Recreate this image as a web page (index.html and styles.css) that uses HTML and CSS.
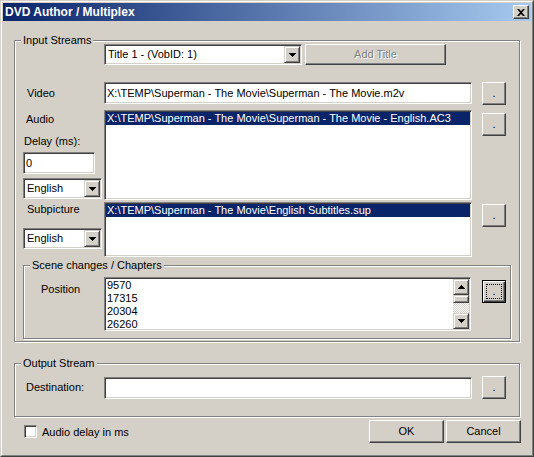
FILE: index.html
```html
<!DOCTYPE html>
<html>
<head>
<meta charset="utf-8">
<title>DVD Author / Multiplex</title>
<link rel="stylesheet" href="styles.css">
</head>
<body>
<div class="window">
  <div class="frame">
    <div class="titlebar">
      <span class="title">DVD Author / Multiplex</span>
      <span class="close"><svg width="8" height="7" viewBox="0 0 8 7"><path d="M0 0h2l2 2l2-2h2l-3 3.5l3 3.5h-2l-2-2l-2 2h-2l3-3.5z" fill="#000"/></svg></span>
    </div>
    <div class="client">
      <div class="group group-input">
        <span class="legend">Input Streams</span>
        <div class="row row-title">
          <div class="combo combo-title">
            <span class="combo-text">Title 1 - (VobID: 1)</span>
            <span class="drop"><svg width="7" height="4" viewBox="0 0 7 4"><path d="M0 0h7v1H0zM1 1h5v1H1zM2 2h3v1H2zM3 3h1v1H3z" fill="#000"/></svg></span>
          </div>
          <div class="btn btn-add disabled">Add Title</div>
        </div>
        <div class="row row-video">
          <div class="lbl lbl-video">Video</div>
          <div class="edit edit-wide">X:\TEMP\Superman - The Movie\Superman - The Movie.m2v</div>
          <div class="btn browse">.</div>
        </div>
        <div class="row row-audio">
          <div class="side">
            <div class="lbl lbl-audio">Audio</div>
            <div class="lbl lbl-delay">Delay (ms):</div>
            <div class="edit edit-delay">0</div>
            <div class="combo combo-lang">
              <span class="combo-text">English</span>
              <span class="drop"><svg width="7" height="4" viewBox="0 0 7 4"><path d="M0 0h7v1H0zM1 1h5v1H1zM2 2h3v1H2zM3 3h1v1H3z" fill="#000"/></svg></span>
            </div>
          </div>
          <div class="listbox list-audio">
            <div class="items">
              <div class="item selected">X:\TEMP\Superman - The Movie\Superman - The Movie - English.AC3</div>
            </div>
          </div>
          <div class="btn browse browse-audio">.</div>
        </div>
        <div class="row row-sub">
          <div class="side">
            <div class="lbl lbl-sub">Subpicture</div>
            <div class="combo combo-lang combo-sub">
              <span class="combo-text">English</span>
              <span class="drop"><svg width="7" height="4" viewBox="0 0 7 4"><path d="M0 0h7v1H0zM1 1h5v1H1zM2 2h3v1H2zM3 3h1v1H3z" fill="#000"/></svg></span>
            </div>
          </div>
          <div class="listbox list-sub">
            <div class="items">
              <div class="item selected">X:\TEMP\Superman - The Movie\English Subtitles.sup</div>
            </div>
          </div>
          <div class="btn browse browse-sub">.</div>
        </div>
        <div class="group group-scene">
          <span class="legend">Scene changes / Chapters</span>
          <div class="row row-scene">
            <div class="lbl lbl-pos">Position</div>
            <div class="listbox list-pos">
              <div class="items">
                <div class="item">9570</div>
                <div class="item">17315</div>
                <div class="item">20304</div>
                <div class="item">26260</div>
              </div>
              <div class="scrollbar">
                <div class="sb-btn"><svg width="7" height="4" viewBox="0 0 7 4"><path d="M3 0h1v1H3zM2 1h3v1H2zM1 2h5v1H1zM0 3h7v1H0z" fill="#000"/></svg></div>
                <div class="sb-thumb"></div>
                <div class="sb-track"></div>
                <div class="sb-btn"><svg width="7" height="4" viewBox="0 0 7 4"><path d="M0 0h7v1H0zM1 1h5v1H1zM2 2h3v1H2zM3 3h1v1H3z" fill="#000"/></svg></div>
              </div>
            </div>
            <div class="btn browse btn-default browse-pos">.</div>
          </div>
        </div>
      </div>
      <div class="group group-output">
        <span class="legend">Output Stream</span>
        <div class="row row-dest">
          <div class="lbl lbl-dest">Destination:</div>
          <div class="edit edit-wide edit-dest"></div>
          <div class="btn browse">.</div>
        </div>
      </div>
      <div class="footer">
        <span class="check"></span>
        <span class="check-label">Audio delay in ms</span>
        <div class="btn btn-ok">OK</div>
        <div class="btn btn-cancel">Cancel</div>
      </div>
    </div>
  </div>
</div>
</body>
</html>
```

FILE: styles.css
```css
* { box-sizing: border-box; }

body {
  margin: 0;
  background: #D4D0C8;
  font-family: "Liberation Sans", Arial, sans-serif;
  font-size: 11px;
  color: #000;
}

.window {
  width: 534px;
  height: 457px;
  border: 1px solid;
  border-color: #D4D0C8 #404040 #404040 #D4D0C8;
  background: #D4D0C8;
}

.frame {
  height: 100%;
  border: 1px solid;
  border-color: #fff #808080 #808080 #fff;
  padding: 1px;
  display: flex;
  flex-direction: column;
}

.titlebar {
  height: 18px;
  flex: none;
  background: linear-gradient(to right, #0A246A, #A6CAF0);
  display: flex;
  align-items: center;
  justify-content: space-between;
  padding: 0 2px 0 2px;
}

.title {
  color: #fff;
  font-weight: bold;
  font-size: 12px;
  line-height: 18px;
}

.close {
  width: 16px;
  height: 14px;
  background: #D4D0C8;
  border: 1px solid;
  border-color: #fff #404040 #404040 #fff;
  box-shadow: inset -1px -1px #808080;
  display: flex;
  align-items: center;
  justify-content: center;
}

.client {
  flex: 1;
  display: flex;
  flex-direction: column;
  padding: 19px 10px 0 11px;
}

/* group boxes */
.group {
  position: relative;
  border: 1px solid #808080;
  box-shadow: inset 1px 1px #fff, 1px 1px #fff;
  display: flex;
  flex-direction: column;
}

.legend {
  position: absolute;
  top: -7px;
  left: 6px;
  padding: 0 2px;
  background: #D4D0C8;
  line-height: 13px;
  white-space: nowrap;
}

.group-input {
  width: 506px;
  height: 302px;
  padding-top: 3px;
}

.row {
  display: flex;
  align-items: flex-start;
  flex: none;
}

.lbl { line-height: 13px; white-space: nowrap; }

/* controls */
.edit {
  background: #fff;
  border: 1px solid;
  border-color: #808080 #fff #fff #808080;
  box-shadow: inset 1px 1px #404040, inset -1px -1px #D4D0C8;
  padding: 1px 2px;
  line-height: 18px;
  white-space: nowrap;
  overflow: hidden;
}

.combo {
  background: #fff;
  border: 1px solid;
  border-color: #808080 #fff #fff #808080;
  box-shadow: inset 1px 1px #404040, inset -1px -1px #D4D0C8;
  padding: 1px;
  height: 21px;
  display: flex;
}

.combo-text {
  flex: 1;
  padding-left: 2px;
  line-height: 17px;
  white-space: nowrap;
  overflow: hidden;
}

.drop, .sb-btn {
  width: 16px;
  height: 17px;
  flex: none;
  background: #D4D0C8;
  border: 1px solid;
  border-color: #D4D0C8 #404040 #404040 #D4D0C8;
  box-shadow: inset 1px 1px #fff, inset -1px -1px #808080;
  display: flex;
  align-items: center;
  justify-content: center;
}

.btn {
  background: #D4D0C8;
  border: 1px solid;
  border-color: #fff #404040 #404040 #fff;
  box-shadow: inset -1px -1px #808080;
  display: flex;
  align-items: center;
  justify-content: center;
  line-height: 13px;
  flex: none;
}

.disabled {
  color: #808080;
  text-shadow: 1px 1px #fff;
}

.btn-default {
  border-color: #000;
  box-shadow: inset 1px 1px #fff, inset -1px -1px #404040, inset -2px -2px #808080;
  outline: 1px dotted #000;
  outline-offset: -5px;
}

.listbox {
  background: #fff;
  border: 1px solid;
  border-color: #808080 #fff #fff #808080;
  box-shadow: inset 1px 1px #404040, inset -1px -1px #D4D0C8;
  padding: 1px;
  display: flex;
  overflow: hidden;
}

.items { flex: 1; overflow: hidden; }

.item {
  height: 13px;
  line-height: 13px;
  padding-left: 1px;
  white-space: nowrap;
}

.item.selected {
  background: #0A246A;
  color: #fff;
}

/* row: title */
.row-title { padding-left: 89px; gap: 3px; }
.combo-title { width: 198px; }
.btn-add { width: 141px; height: 21px; }

/* row: video */
.row-video { margin-top: 17px; }
.lbl-video { width: 89px; padding-left: 12px; line-height: 22px; }
.edit-wide { width: 368px; height: 22px; }
.browse { margin-left: 10px; width: 24px; height: 23px; }

/* row: audio */
.row-audio { margin-top: 5px; }
.side {
  width: 89px;
  padding-left: 8px;
  display: flex;
  flex-direction: column;
  align-items: flex-start;
}
.lbl-audio { margin: 3px 0 0 3px; }
.lbl-delay { margin: 9px 0 0 1px; }
.edit-delay { width: 72px; height: 22px; margin-top: 4px; }
.combo-lang { width: 79px; margin-top: 4px; }
.list-audio { width: 368px; height: 90px; }
.browse-audio { margin-top: 3px; }

/* row: subpicture */
.row-sub { margin-top: 2px; }
.lbl-sub { margin: 1px 0 0 4px; }
.combo-sub { margin-top: 12px; }
.list-sub { width: 368px; height: 55px; }
.browse-sub { margin-top: 2px; }

/* scene group */
.group-scene {
  margin: 8px 0 0 8px;
  width: 488px;
  height: 74px;
  padding-top: 11px;
}
.lbl-pos { width: 80px; padding-left: 17px; margin-top: 6px; }
.list-pos { width: 367px; height: 54px; }
.browse-pos { margin: 3px 0 0 11px; }

.scrollbar {
  width: 16px;
  display: flex;
  flex-direction: column;
}
.sb-btn { height: 16px; }
.sb-thumb {
  height: 8px;
  background: #D4D0C8;
  border: 1px solid;
  border-color: #D4D0C8 #404040 #404040 #D4D0C8;
  box-shadow: inset 1px 1px #fff, inset -1px -1px #808080;
}
.sb-track {
  flex: 1;
  background: repeating-conic-gradient(#fff 0 25%, #D4D0C8 0 50%) 0 0 / 2px 2px;
}

/* output group */
.group-output {
  margin-top: 21px;
  width: 506px;
  height: 54px;
  padding-top: 12px;
}
.lbl-dest { width: 89px; padding-left: 11px; line-height: 22px; }
.edit-dest { margin-top: 1px; }

/* footer */
.footer {
  margin-top: 3px;
  height: 23px;
  display: flex;
  align-items: center;
  padding-left: 10px;
}
.check {
  width: 13px;
  height: 13px;
  background: #fff;
  border: 1px solid;
  border-color: #808080 #fff #fff #808080;
  box-shadow: inset 1px 1px #404040, inset -1px -1px #D4D0C8;
}
.check-label { margin-left: 5px; }
.btn-ok { margin-left: auto; width: 75px; height: 23px; }
.btn-cancel { margin-left: 2px; width: 75px; height: 23px; }
```
